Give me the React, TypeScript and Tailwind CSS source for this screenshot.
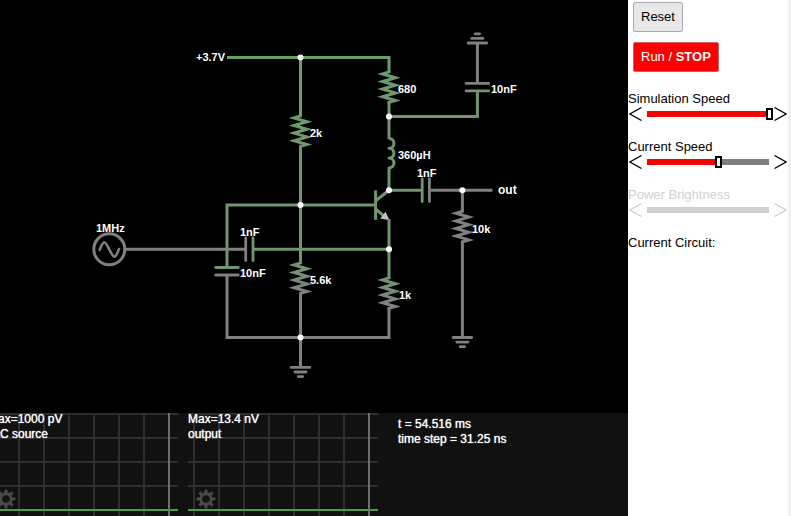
import { useState } from "react";

const HIGH = "#689e68";
const MID = "#72956f";
const LOW = "#808080";

type Point = [number, number];

function Wire({ points, color = LOW }: { points: Point[]; color?: string }) {
  return <polyline points={points.map((p) => p.join(",")).join(" ")} stroke={color} />;
}

// 30px tall zigzag, four periods
function Resistor({ x, y, id, from, to }: { x: number; y: number; id: string; from: string; to: string }) {
  const points: Point[] = [[x, y - 1], [x, y]];
  for (let i = 0; i < 4; i++) {
    points.push([x - 6.5, y + i * 7.6 + 1.9], [x + 6.5, y + i * 7.6 + 5.7]);
  }
  points.push([x, y + 30.4], [x, y + 31.4]);
  return (
    <>
      <linearGradient id={id} gradientUnits="userSpaceOnUse" x1={x} y1={y} x2={x} y2={y + 30}>
        <stop offset="0" stopColor={from} />
        <stop offset="1" stopColor={to} />
      </linearGradient>
      <Wire points={points} color={`url(#${id})`} />
    </>
  );
}

function Ground({ x, y, up = false }: { x: number; y: number; up?: boolean }) {
  const step = up ? -4.6 : 4.6;
  return (
    <g stroke={LOW} strokeWidth="2.8" strokeLinecap="round">
      <path d={`M${x - 9.3} ${y}h18.6M${x - 5.6} ${y + step}h11.2M${x - 2.2} ${y + step * 2}h4.4`} />
    </g>
  );
}

function Plate({ x, y, vertical = false, color }: { x: number; y: number; vertical?: boolean; color: string }) {
  const d = vertical ? `M${x} ${y - 11.3}v22.6` : `M${x - 11.3} ${y}h22.6`;
  return <path d={d} stroke={color} strokeWidth="2.8" strokeLinecap="round" />;
}

const nodes: Point[] = [
  [300.5, 57.6],
  [389, 116.6],
  [389, 190.3],
  [462.4, 190.3],
  [300.5, 205],
  [389, 249.3],
  [300.5, 337.4],
];

const labels: { x: number; y: number; text: string }[] = [
  { x: 196, y: 61, text: "+3.7V" },
  { x: 310, y: 137, text: "2k" },
  { x: 398, y: 93, text: "680" },
  { x: 491, y: 93, text: "10nF" },
  { x: 398, y: 159, text: "360µH" },
  { x: 417, y: 177, text: "1nF" },
  { x: 472, y: 233, text: "10k" },
  { x: 96, y: 232, text: "1MHz" },
  { x: 240, y: 236, text: "1nF" },
  { x: 240, y: 277, text: "10nF" },
  { x: 310, y: 284, text: "5.6k" },
  { x: 399, y: 299, text: "1k" },
];

function Circuit() {
  return (
    <svg
      className="block min-h-0 w-full flex-1"
      viewBox="0 0 628 413"
      preserveAspectRatio="xMinYMin meet"
      fill="none"
      strokeWidth="3"
      strokeMiterlimit="10"
    >
      {/* supply rail */}
      <Wire points={[[227, 57.6], [389, 57.6], [389, 72]]} color={HIGH} />
      <Wire points={[[300.5, 57.6], [300.5, 116]]} color={HIGH} />
      <Resistor x={389} y={72} id="r680" from={HIGH} to={MID} />
      <Resistor x={300.5} y={116} id="r2k" from={HIGH} to={MID} />
      <Wire points={[[300.5, 146], [300.5, 263]]} color={MID} />
      <Wire points={[[389, 102], [389, 139]]} color={MID} />

      {/* decoupling capacitor */}
      <Ground x={477.4} y={43} up />
      <Wire points={[[477.4, 43], [477.4, 83]]} />
      <Plate x={477.4} y={83.4} color={LOW} />
      <Plate x={477.4} y={90.8} color={MID} />
      <Wire points={[[477.4, 91], [477.4, 116.6], [389, 116.6]]} color={MID} />

      {/* inductor */}
      <path
        d="M389 138.5A4.9 4.9 0 0 1 389 148.3A4.9 4.9 0 0 1 389 158.1A4.9 4.9 0 0 1 389 168V190.3"
        stroke={MID}
        strokeLinejoin="round"
      />

      {/* output stage */}
      <Wire points={[[389, 190.3], [422, 190.3]]} color={MID} />
      <Plate x={422.2} y={190.3} vertical color={MID} />
      <Plate x={429.4} y={190.3} vertical color={LOW} />
      <Wire points={[[430, 190.3], [492.5, 190.3]]} />
      <Wire points={[[462.4, 190.3], [462.4, 212]]} />
      <Resistor x={462.4} y={211.4} id="r10k" from={LOW} to={LOW} />
      <Wire points={[[462.4, 241.5], [462.4, 337.5]]} />
      <Ground x={462.4} y={337.5} />

      {/* transistor */}
      <Wire points={[[375.6, 190.3], [375.6, 219.8]]} color={MID} />
      <path d="M376 200.5L389 190.3M376 209.5L386 217.5" stroke={MID} />
      <path d="M380.2 218.5L385.5 211.8L389.6 220.2Z" fill="#c0c0c0" />
      <Wire points={[[389, 219], [389, 278]]} color={MID} />
      <Wire points={[[375.6, 205], [227, 205], [227, 267]]} color={MID} />

      {/* source and feedback */}
      <circle cx="109.3" cy="249.3" r="15.5" stroke={LOW} />
      <path
        d="M99.7 249.8C101.5 245.5 102.5 242.2 104.5 242.2C107 242.2 111.5 256.6 114.3 256.6C116.3 256.6 117.3 253 119 249"
        stroke={LOW}
        strokeWidth="2.6"
        strokeLinecap="round"
      />
      <Wire points={[[125, 249.3], [245, 249.3]]} />
      <Plate x={245.7} y={249.3} vertical color={LOW} />
      <Plate x={253} y={249.3} vertical color={MID} />
      <Wire points={[[253, 249.3], [389, 249.3]]} color={MID} />

      {/* return path */}
      <Plate x={227} y={267.5} color={MID} />
      <Plate x={227} y={275} color={LOW} />
      <Wire points={[[227, 275], [227, 337.4], [389, 337.4], [389, 308]]} />
      <Resistor x={300.5} y={263} id="r56k" from={MID} to={LOW} />
      <Resistor x={389} y={278} id="r1k" from={MID} to={LOW} />
      <Wire points={[[300.5, 293], [300.5, 367]]} />
      <Ground x={300.5} y={367.4} />

      {nodes.map(([x, y]) => (
        <circle key={`${x}-${y}`} cx={x} cy={y} r="3" fill="#fff" />
      ))}
      <g fill="#fff" stroke="none" className="text-[11px] font-bold">
        {labels.map((l) => (
          <text key={`${l.x}-${l.y}`} x={l.x} y={l.y}>
            {l.text}
          </text>
        ))}
        <text x="498" y="194" className="text-[12px]">
          out
        </text>
      </g>
    </svg>
  );
}

const teeth = [0, 45, 90, 135, 180, 225, 270, 315];

function Scope({ max, name, nameX = 0 }: { max: string; name: string; nameX?: number }) {
  return (
    <svg className="h-full w-[200px] shrink-0" fill="none" strokeWidth="2">
      <path d="M6 0V103M31 0V103M56 0V103M81 0V103M106 0V103M131 0V103M156 0V103" stroke="#2e2e2e" />
      <path d="M0 1H190M0 25H190M0 49H190M0 73H190" stroke="#2e2e2e" />
      <path d="M0 97H190" stroke="#4ca04c" />
      <path d="M181 0V103" stroke="#6e6e6e" />
      <g stroke="#4a4a4a">
        <circle cx="18" cy="86" r="5.2" strokeWidth="3" />
        {teeth.map((a) => (
          <path key={a} d="M18 80.5V76.6" strokeWidth="3" transform={`rotate(${a} 18 86)`} />
        ))}
      </g>
      <g fill="#fff" className="text-[12px] [text-shadow:0_0_1px_#fff]">
        <text x="0" y="10">{max}</text>
        <text x={nameX} y="25">{name}</text>
      </g>
    </svg>
  );
}

function Arrow({ label, right = false, disabled }: { label: string; right?: boolean; disabled?: boolean }) {
  return (
    <button
      type="button"
      aria-label={label}
      disabled={disabled}
      className={right ? "flex w-[19px] justify-end pr-px" : "flex w-[19px] justify-start pl-px"}
    >
      <svg width="13" height="14" fill="none" stroke="currentColor" strokeWidth="1.3">
        <path d={right ? "M0.5 0.5L12 7L0.5 13.5" : "M12.5 0.5L1 7L12.5 13.5"} />
      </svg>
    </button>
  );
}

function Slider({ id, label, initial, disabled }: { id: string; label: string; initial: number; disabled?: boolean }) {
  const [value, setValue] = useState(initial);
  return (
    <div className={disabled ? "text-[#d0d0d0]" : "text-black"}>
      <label htmlFor={id} className="block">
        {label}
      </label>
      <div className="flex h-3.5 items-center">
        <Arrow label={`Decrease ${label}`} disabled={disabled} />
        <div className={disabled ? "relative h-[6px] flex-1 bg-[#d0d0d0]" : "relative h-[6px] flex-1 bg-[#808080]"}>
          {!disabled && <div className="h-full bg-[#fb0000]" style={{ width: `${value}%` }} />}
          <input
            id={id}
            type="range"
            min={0}
            max={100}
            value={value}
            disabled={disabled}
            onChange={(e) => setValue(Number(e.target.value))}
            className="absolute -inset-x-[3px] -top-[3px] m-0 h-3 w-[calc(100%+7px)] appearance-none bg-transparent disabled:opacity-0 [&::-webkit-slider-thumb]:h-3 [&::-webkit-slider-thumb]:w-[7px] [&::-webkit-slider-thumb]:appearance-none [&::-webkit-slider-thumb]:border-2 [&::-webkit-slider-thumb]:border-black [&::-webkit-slider-thumb]:bg-white"
          />
        </div>
        <Arrow label={`Increase ${label}`} right disabled={disabled} />
      </div>
    </div>
  );
}

export default function App() {
  return (
    <div className="flex h-screen overflow-hidden bg-white font-['Liberation_Sans',Arial,sans-serif]">
      <main className="flex min-w-0 flex-1 flex-col bg-black">
        <Circuit />
        <section className="flex h-[103px] shrink-0 overflow-hidden bg-[#111]">
          <div className="-ml-3 flex">
            <Scope max="Max=1000 pV" name="AC source" nameX={4} />
            <Scope max="Max=13.4 nV" name="output" />
          </div>
          <div className="pt-1 pl-[10px] text-[12px] leading-[15px] text-white [text-shadow:0_0_1px_#fff]">
            <p>t = 54.516 ms</p>
            <p>time step = 31.25 ns</p>
          </div>
        </section>
      </main>

      <aside className="w-[163px] shrink-0 border-r-[3px] border-[#f0f0f0] text-[13px] leading-4 text-black">
        <div className="flex flex-col items-start gap-[10px] pt-0.5 pl-[5px]">
          <button type="button" className="h-[30px] rounded-[2px] border border-[#aaa] bg-[#e8e8e8] px-[7px]">
            Reset
          </button>
          <button type="button" className="h-[30px] rounded-[2px] border border-[#d06060] bg-[#ff0000] px-[7px] text-white">
            Run / <strong className="font-bold">STOP</strong>
          </button>
        </div>
        <div className="mt-[19px] flex flex-col gap-[18px]">
          <Slider id="sim-speed" label="Simulation Speed" initial={100} />
          <Slider id="current-speed" label="Current Speed" initial={58} />
          <Slider id="power-brightness" label="Power Brightness" initial={50} disabled />
          <p>Current Circuit:</p>
        </div>
      </aside>
    </div>
  );
}
